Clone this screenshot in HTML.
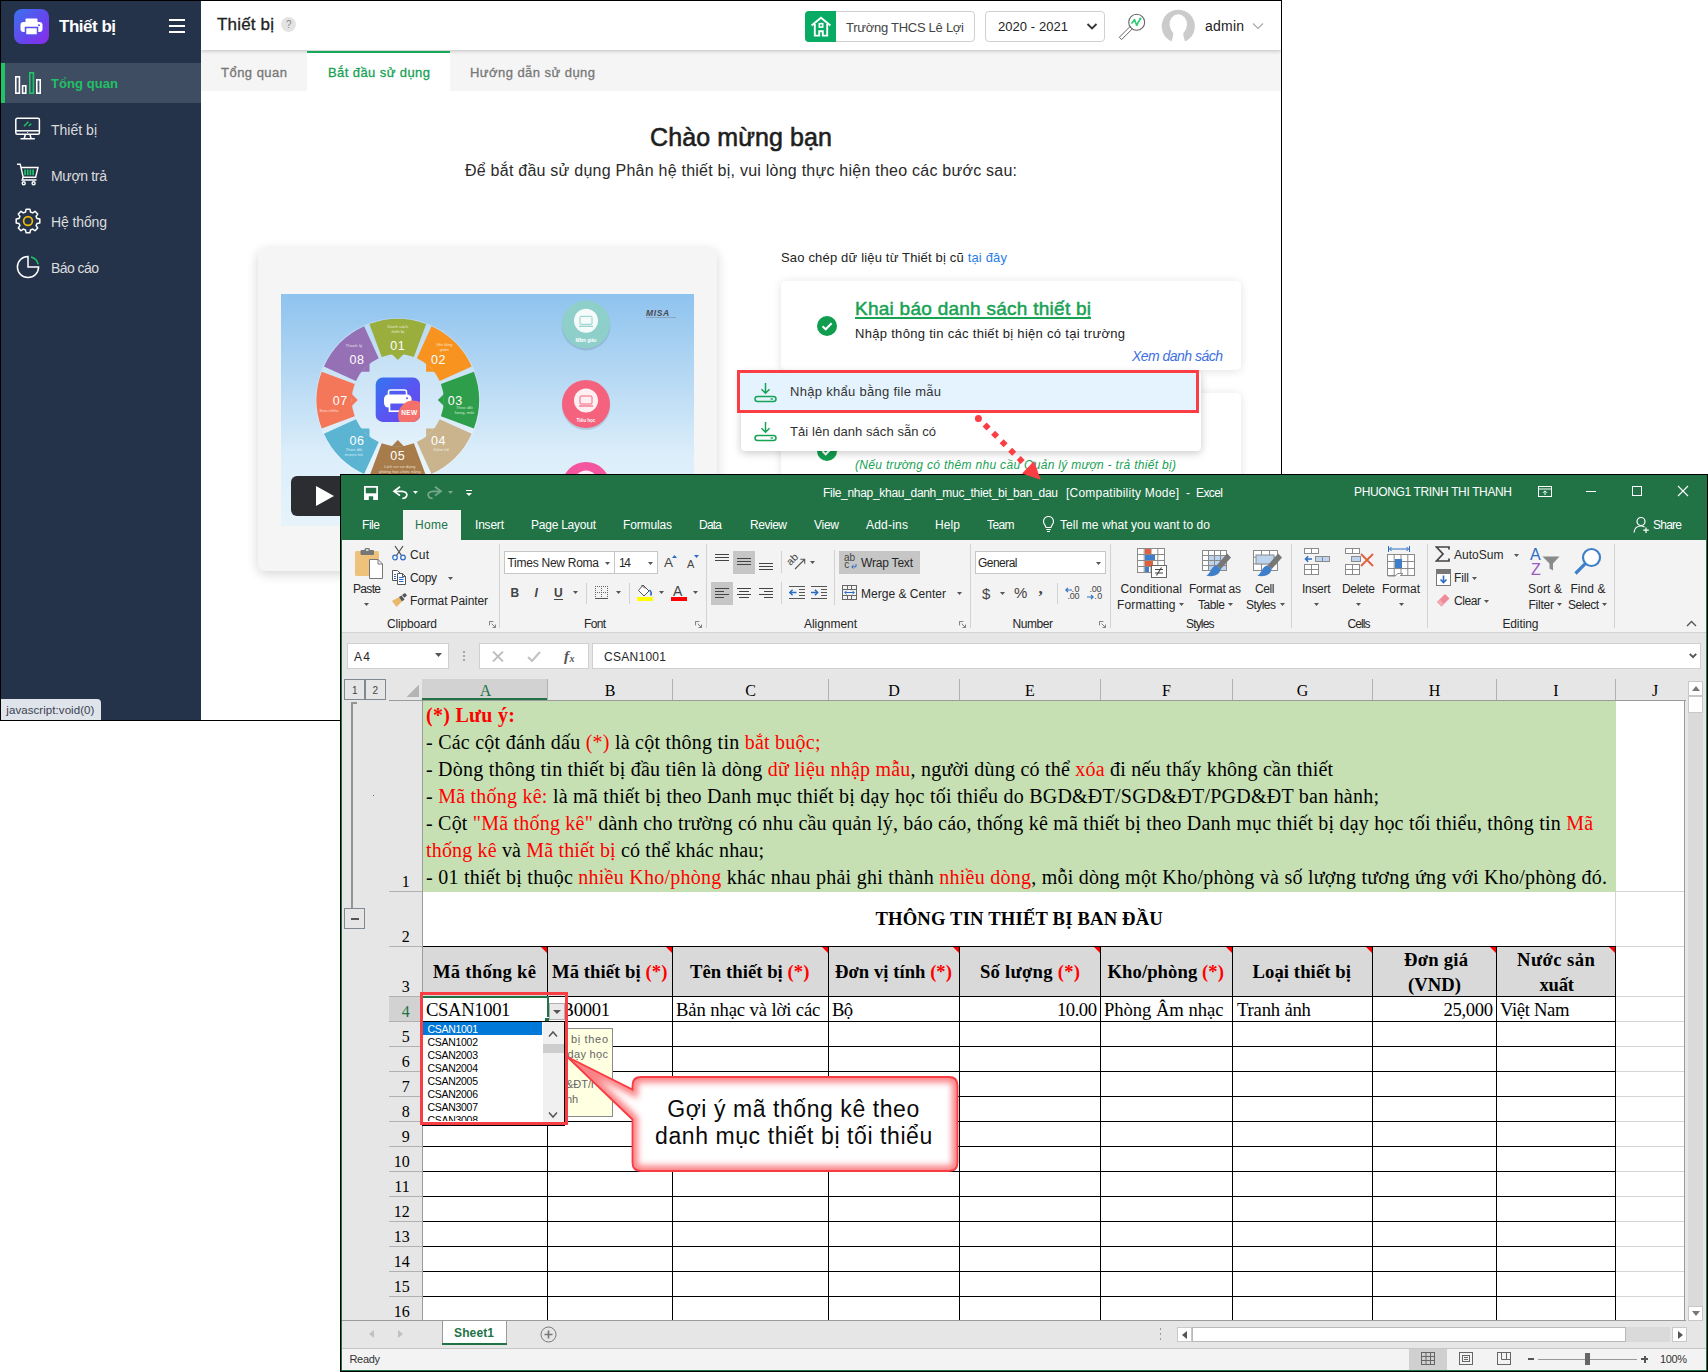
<!DOCTYPE html>
<html><head><meta charset="utf-8"><title>Thiết bị</title><style>html,body{margin:0;padding:0;background:#fff}
body{width:1708px;height:1372px;position:relative;overflow:hidden;font-family:"Liberation Sans",sans-serif}
.r{position:absolute;display:block}
.t{position:absolute;white-space:nowrap;line-height:0;font-family:"Liberation Sans",sans-serif;color:#000}
.se{font-family:"Liberation Serif",serif}
.b{font-weight:bold}.i{font-style:italic}
</style></head><body>
<div class="r" style="left:0;top:0;width:1282px;height:721px;background:#000"></div>
<div id="w1" class="r" style="left:1px;top:1px;width:1280px;height:719px;background:#fff;overflow:hidden">
<div class="r" style="left:-1px;top:-1px;width:1282px;height:721px">
<div class="r" style="left:201px;top:50px;width:1080px;height:41px;background:#f5f5f5;"></div>
<div class="r" style="left:201px;top:1px;width:1080px;height:49px;background:#fff;box-shadow:0 1px 4px rgba(0,0,0,.22);"></div>
<span class="t" style="left:217.00px;top:25.11px;font-size:17px;letter-spacing:0.179px;color:#212121;-webkit-text-stroke:0.3px #212121;">Thiết bị</span>
<div class="r" style="left:281px;top:17px;width:15px;height:15px;border-radius:50%;background:#e3e3e3"></div>
<span class="t" style="left:286.00px;top:24.54px;font-size:10px;color:#888;">?</span>
<div class="r" style="left:805px;top:11px;width:170px;height:31px;border:1px solid #d0d0d0;border-radius:4px;box-sizing:border-box;background:#fff"></div>
<div class="r" style="left:805px;top:11px;width:31px;height:31px;background:#08ab64;border-radius:4px 0 0 4px"></div>
<svg class="r" style="left:810px;top:15px" width="22" height="23" viewBox="0 0 22 23" fill="none" stroke="#fff" stroke-width="1.900" stroke-linejoin="miter"><path d="M1.600 10.400 L11 2.700 L20.400 10.400"/><path d="M4.800 9 V20.600 H9.200 V16.200 H12.800 V20.600 H17.200 V9"/><rect x="9.300" y="8.700" width="3.400" height="3.400" stroke-width="1.600"/></svg>
<span class="t" style="left:846.00px;top:27.50px;font-size:13px;letter-spacing:-0.269px;color:#444;">Trường THCS Lê Lợi</span>
<div class="r" style="left:985px;top:11px;width:120px;height:31px;border:1px solid #d0d0d0;border-radius:4px;box-sizing:border-box;background:#fff"></div>
<span class="t" style="left:998.00px;top:26.50px;font-size:13px;letter-spacing:0.061px;color:#222;">2020 - 2021</span>
<svg class="r" style="left:1086px;top:22px" width="12" height="9" viewBox="0 0 12 9" fill="none" stroke="#333" stroke-width="1.8"><path d="M1.5 2 L6 6.5 L10.5 2"/></svg>
<svg class="r" style="left:1117px;top:11px" width="30" height="30" viewBox="0 0 30 30" fill="none"><circle cx="19.7" cy="11.2" r="8" stroke="#666" stroke-width="1.1" fill="#fff"/><path d="M12.900 15.700 L15.200 18 L4.600 28.600 L2.300 26.300Z" stroke="#666" stroke-width="1" fill="#fff"/><path d="M14.500 12.500 L17.500 9 L19.700 14 L23.500 7.500" stroke="#2ecc71" stroke-width="1.6" stroke-linejoin="round"/><circle cx="17.500" cy="9" r="1.100" fill="#2ecc71"/><circle cx="19.700" cy="14" r="1.100" fill="#2ecc71"/><circle cx="23.500" cy="7.500" r="1.100" fill="#2ecc71"/></svg>
<svg class="r" style="left:1161px;top:9px" width="35" height="35" viewBox="0 0 35 35"><circle cx="17.3" cy="17.3" r="16.6" fill="#cbcbcb"/><ellipse cx="17.3" cy="15.5" rx="8.7" ry="10.2" fill="#fff"/><path d="M12.3 22 C12.5 27 11.5 30 9.5 35 H25 C23 30 22 27 22.300 22Z" fill="#fff"/></svg>
<span class="t" style="left:1205.00px;top:26.15px;font-size:14px;letter-spacing:0.217px;color:#222;">admin</span>
<svg class="r" style="left:1251.5px;top:22.3px" width="12" height="8" viewBox="0 0 12 8" fill="none" stroke="#aaa" stroke-width="1.2"><path d="M1 1.5 L6 6.5 L11 1.5"/></svg>
<div class="r" style="left:307px;top:51px;width:143px;height:40px;background:#fff;border-top:2px solid #16a95a;box-sizing:border-box;"></div>
<span class="t" style="left:221.00px;top:72.50px;font-size:13px;letter-spacing:0.480px;color:#777;-webkit-text-stroke:0.3px #777;">Tổng quan</span>
<span class="t" style="left:328.00px;top:72.50px;font-size:13px;letter-spacing:0.417px;color:#17a254;-webkit-text-stroke:0.3px #17a254;">Bắt đầu sử dụng</span>
<span class="t" style="left:470.00px;top:72.50px;font-size:13px;letter-spacing:0.455px;color:#777;-webkit-text-stroke:0.3px #777;">Hướng dẫn sử dụng</span>
<div class="r" style="left:1px;top:1px;width:200px;height:719px;background:#24334a;"></div>
<div class="r" style="left:14px;top:9px;width:35px;height:35px;border-radius:8px;background:linear-gradient(135deg,#3a73ee 0%,#6447ee 55%,#8a2be8 100%)"></div>
<svg class="r" style="left:20px;top:16px" width="23" height="21" viewBox="0 0 23 21"><rect x="5.5" y="2.5" width="12" height="5" rx="1" fill="#fff"/><rect x="0.5" y="6" width="22" height="10" rx="3" fill="#fff"/><rect x="5.5" y="11.5" width="12" height="7.5" fill="#fff" stroke="#5850ee" stroke-width="1.5"/><circle cx="19" cy="9.3" r="1" fill="#5850ee"/></svg>
<span class="t b" style="left:59.00px;top:27.11px;font-size:17px;letter-spacing:-0.491px;color:#fff;">Thiết bị</span>
<div class="r" style="left:169px;top:19px;width:16px;height:2px;background:#fff;"></div>
<div class="r" style="left:169px;top:25px;width:16px;height:2px;background:#fff;"></div>
<div class="r" style="left:169px;top:31px;width:16px;height:2px;background:#fff;"></div>
<div class="r" style="left:1px;top:63px;width:200px;height:40px;background:#3f4d63;"></div>
<div class="r" style="left:1px;top:63px;width:4px;height:40px;background:#1fc466;"></div>
<span class="t b" style="left:51.00px;top:83.50px;font-size:13px;letter-spacing:0.072px;color:#22c064;">Tổng quan</span>
<svg class="r" style="left:14px;top:70px" width="28" height="26" viewBox="0 0 28 26" fill="none" stroke-width="1.6"><rect x="1.8" y="6.8" width="3.6" height="16.4" stroke="#fff"/><rect x="8.6" y="15.8" width="3.2" height="7.4" stroke="#fff"/><rect x="15.8" y="2.8" width="3.6" height="20.4" stroke="#1fc466"/><rect x="22.8" y="9.8" width="3.4" height="13.4" stroke="#fff"/></svg>
<span class="t" style="left:51.00px;top:129.75px;font-size:14px;letter-spacing:0.013px;color:#dcdcdc;">Thiết bị</span>
<span class="t" style="left:51.00px;top:175.75px;font-size:14px;letter-spacing:-0.318px;color:#dcdcdc;">Mượn trả</span>
<span class="t" style="left:51.00px;top:221.75px;font-size:14px;letter-spacing:-0.117px;color:#dcdcdc;">Hệ thống</span>
<span class="t" style="left:51.00px;top:267.75px;font-size:14px;letter-spacing:-0.562px;color:#dcdcdc;">Báo cáo</span>
<svg class="r" style="left:14px;top:116px" width="28" height="26" viewBox="0 0 28 26" fill="none" stroke="#fff" stroke-width="1.500"><rect x="1.800" y="2.300" width="23.600" height="16" rx="1.500"/><path d="M1.800 14.800 H25.400"/><path d="M11.300 18.500 L10.300 22.300 M16 18.500 L17 22.300 M6.500 22.800 H20.800"/><path d="M10 10.300 L14.400 5.800 M14.600 10 L17.300 7.700" stroke="#1fc466" stroke-width="1.500"/><circle cx="13.600" cy="16.600" r=".6" fill="#fff" stroke="none"/></svg>
<svg class="r" style="left:14px;top:161px" width="28" height="27" viewBox="0 0 28 27" fill="none" stroke="#fff" stroke-width="1.400"><path d="M3 3.200 H6.200 L9.200 16.200 H21.700 L24 6.500 H7"/><path d="M9.200 16.200 L8.200 19 H22.500"/><circle cx="9.700" cy="22.300" r="1.500"/><circle cx="19.600" cy="22.300" r="1.500"/><path d="M11 8.600 V14.200 M13.700 8.600 V14.200 M16.400 8.600 V14.200 M19.100 8.600 V14.200" stroke="#1fc466" stroke-width="1.700"/></svg>
<svg class="r" style="left:14px;top:207px" width="28" height="28" viewBox="0 0 28 28" fill="none"><path d="M23.0 11.5 L25.8 12.1 L25.8 15.9 L23.0 16.5 L22.1 18.6 L23.7 21.0 L21.0 23.7 L18.6 22.1 L16.5 23.0 L15.9 25.8 L12.1 25.8 L11.5 23.0 L9.4 22.1 L7.0 23.7 L4.3 21.0 L5.9 18.6 L5.0 16.5 L2.2 15.9 L2.2 12.1 L5.0 11.5 L5.9 9.4 L4.3 7.0 L7.0 4.3 L9.4 5.9 L11.5 5.0 L12.1 2.2 L15.9 2.2 L16.5 5.0 L18.6 5.9 L21.0 4.3 L23.7 7.0 L22.1 9.4Z" stroke="#fff" stroke-width="1.500" stroke-linejoin="round"/><circle cx="14" cy="14" r="4.400" stroke="#f0b90b" stroke-width="1.700"/></svg>
<svg class="r" style="left:14px;top:253px" width="28" height="28" viewBox="0 0 28 28" fill="none" stroke-width="1.500"><path d="M14 3.400 A10.600 10.600 0 1 0 24.600 14 H14 Z" stroke="#fff"/><path d="M17 4 A9.800 9.800 0 0 1 24.200 11.300" stroke="#1fc466"/></svg>
<div class="r" style="left:1px;top:699px;width:100px;height:21px;background:#dfe3ea;border-radius:0 4px 0 0;"></div>
<span class="t" style="left:6.30px;top:709.52px;font-size:11.5px;letter-spacing:0.070px;color:#3a4250;">javascript:void(0)</span>
<span class="t" style="left:650.00px;top:137.34px;font-size:25px;letter-spacing:0.106px;color:#1e1e1e;-webkit-text-stroke:0.6px #1e1e1e;">Chào mừng bạn</span>
<span class="t" style="left:465.00px;top:170.96px;font-size:16px;letter-spacing:0.240px;color:#2a2a2a;">Để bắt đầu sử dụng Phân hệ thiết bị, vui lòng thực hiện theo các bước sau:</span>
<span class="t" style="left:781.00px;top:257.50px;font-size:13px;letter-spacing:0.171px;"><span style="color:#222">Sao chép dữ liệu từ Thiết bị cũ </span><span style="color:#2a7de1">tại đây</span></span>
<div class="r" style="left:258px;top:248px;width:459px;height:323px;background:#f5f5f5;border-radius:7px;box-shadow:0 3px 12px rgba(0,0,0,.17);"></div>
<div class="r" style="left:281px;top:294px;width:413px;height:232px;background:linear-gradient(180deg,#8ec3ef 0%,#b5d8f3 35%,#dceefa 70%,#e6f3fb 100%);overflow:hidden">
<svg class="r" style="left:0;top:0" width="413" height="231" viewBox="0 0 413 231"><circle cx="116.8" cy="106.1" r="82.2" fill="rgba(255,255,255,.30)"/><path d="M88.4 30.0 A81.2 81.2 0 0 1 145.2 30.0 L132.9 63.0 A46 46 0 0 0 100.7 63.0Z" fill="#9aae3e"/><path d="M110.8 60.0 L116.8 66.1 L122.8 60.0Z" fill="#9aae3e"/><text x="116.8" y="55.5" text-anchor="middle" font-family="Liberation Sans" font-size="12.5" letter-spacing=".6" fill="#fff">01</text><text x="116.8" y="33.6" text-anchor="middle" font-family="Liberation Sans" font-size="4.3" fill="rgba(255,255,255,.78)">Danh sách</text><text x="116.8" y="38.7" text-anchor="middle" font-family="Liberation Sans" font-size="4.3" fill="rgba(255,255,255,.78)">thiết bị</text><path d="M150.5 32.2 A81.2 81.2 0 0 1 190.7 72.4 L158.7 87.0 A46 46 0 0 0 135.9 64.2Z" fill="#f7931e"/><path d="M145.1 69.2 L145.1 77.8 L153.7 77.8Z" fill="#f7931e"/><text x="157.5" y="69.8" text-anchor="middle" font-family="Liberation Sans" font-size="12.5" letter-spacing=".6" fill="#fff">02</text><text x="163.3" y="51.6" text-anchor="middle" font-family="Liberation Sans" font-size="4.3" fill="rgba(255,255,255,.78)">Ghi tăng</text><text x="163.3" y="56.7" text-anchor="middle" font-family="Liberation Sans" font-size="4.3" fill="rgba(255,255,255,.78)">giảm</text><path d="M192.9 77.7 A81.2 81.2 0 0 1 192.9 134.5 L159.9 122.2 A46 46 0 0 0 159.9 90.0Z" fill="#2e9e4a"/><path d="M162.9 100.1 L156.8 106.1 L162.9 112.1Z" fill="#2e9e4a"/><text x="174.3" y="110.5" text-anchor="middle" font-family="Liberation Sans" font-size="12.5" letter-spacing=".6" fill="#fff">03</text><text x="183.3" y="114.6" text-anchor="middle" font-family="Liberation Sans" font-size="4.3" fill="rgba(255,255,255,.78)">Theo dõi</text><text x="183.3" y="119.7" text-anchor="middle" font-family="Liberation Sans" font-size="4.3" fill="rgba(255,255,255,.78)">hỏng, mất</text><path d="M190.7 139.8 A81.2 81.2 0 0 1 150.5 180.0 L135.9 148.0 A46 46 0 0 0 158.7 125.2Z" fill="#c9b48d"/><path d="M153.7 134.4 L145.1 134.4 L145.1 143.0Z" fill="#c9b48d"/><text x="157.5" y="151.2" text-anchor="middle" font-family="Liberation Sans" font-size="12.5" letter-spacing=".6" fill="#fff">04</text><text x="160.3" y="157.1" text-anchor="middle" font-family="Liberation Sans" font-size="4.3" fill="rgba(255,255,255,.78)">Kiểm kê</text><path d="M145.2 182.2 A81.2 81.2 0 0 1 88.4 182.2 L100.7 149.2 A46 46 0 0 0 132.9 149.2Z" fill="#a87c4a"/><path d="M122.8 152.2 L116.8 146.1 L110.8 152.2Z" fill="#a87c4a"/><text x="116.8" y="165.5" text-anchor="middle" font-family="Liberation Sans" font-size="12.5" letter-spacing=".6" fill="#fff">05</text><text x="118.8" y="173.6" text-anchor="middle" font-family="Liberation Sans" font-size="4.3" fill="rgba(255,255,255,.78)">Lịch sử sử dụng</text><text x="118.8" y="178.7" text-anchor="middle" font-family="Liberation Sans" font-size="4.3" fill="rgba(255,255,255,.78)">phòng học chức năng</text><path d="M83.1 180.0 A81.2 81.2 0 0 1 42.9 139.8 L74.9 125.2 A46 46 0 0 0 97.7 148.0Z" fill="#5ab4d2"/><path d="M88.5 143.0 L88.5 134.4 L79.9 134.4Z" fill="#5ab4d2"/><text x="76.1" y="151.2" text-anchor="middle" font-family="Liberation Sans" font-size="12.5" letter-spacing=".6" fill="#fff">06</text><text x="72.8" y="157.1" text-anchor="middle" font-family="Liberation Sans" font-size="4.3" fill="rgba(255,255,255,.78)">Theo dõi</text><text x="72.8" y="162.2" text-anchor="middle" font-family="Liberation Sans" font-size="4.3" fill="rgba(255,255,255,.78)">mượn trả</text><path d="M40.7 134.5 A81.2 81.2 0 0 1 40.7 77.7 L73.7 90.0 A46 46 0 0 0 73.7 122.2Z" fill="#f4775a"/><path d="M70.7 112.1 L76.8 106.1 L70.7 100.1Z" fill="#f4775a"/><text x="59.3" y="110.5" text-anchor="middle" font-family="Liberation Sans" font-size="12.5" letter-spacing=".6" fill="#fff">07</text><text x="47.8" y="118.1" text-anchor="middle" font-family="Liberation Sans" font-size="4.3" fill="rgba(255,255,255,.78)">Sửa chữa</text><path d="M42.9 72.4 A81.2 81.2 0 0 1 83.1 32.2 L97.7 64.2 A46 46 0 0 0 74.9 87.0Z" fill="#9570b4"/><path d="M79.9 77.8 L88.5 77.8 L88.5 69.2Z" fill="#9570b4"/><text x="76.1" y="69.8" text-anchor="middle" font-family="Liberation Sans" font-size="12.5" letter-spacing=".6" fill="#fff">08</text><text x="72.8" y="53.1" text-anchor="middle" font-family="Liberation Sans" font-size="4.3" fill="rgba(255,255,255,.78)">Thanh lý</text><defs><linearGradient id="cg" x1="0" y1="0" x2="1" y2="1"><stop offset="0" stop-color="#3276ee"/><stop offset=".55" stop-color="#5a55f2"/><stop offset="1" stop-color="#7040ea"/></linearGradient><clipPath id="cc"><rect x="94.7" y="83.6" width="44.3" height="44.3" rx="7"/></clipPath></defs><rect x="94.7" y="83.6" width="44.3" height="44.3" rx="7" fill="url(#cg)"/><rect x="107.5" y="96" width="18" height="7" rx="2" fill="none" stroke="#fff" stroke-width="1.6"/><rect x="103" y="100.5" width="27.6" height="13" rx="4.5" fill="#fff"/><rect x="108.5" y="108.7" width="16" height="8.5" fill="#5a55f2" stroke="#fff" stroke-width="1.7"/><circle cx="126" cy="104.3" r="1" fill="#5a55f2"/><circle cx="132.3" cy="121.8" r="15.2" fill="#f4706a" clip-path="url(#cc)"/><text x="128.3" y="120.7" text-anchor="middle" font-family="Liberation Sans" font-weight="bold" font-size="6.6" letter-spacing=".3" fill="#fff">NEW</text><circle cx="305" cy="32.1" r="24.3" fill="rgba(60,60,90,.16)"/><circle cx="305" cy="30.3" r="24" fill="#8fcfca"/><circle cx="305" cy="26.8" r="12" fill="rgba(255,255,255,.9)"/><rect x="299" y="22.3" width="12" height="8" rx="1" fill="none" stroke="#8fcfca" stroke-width="1"/><path d="M298 32.3 H312" stroke="#8fcfca" stroke-width="1.2"/><text x="305" y="48.3" text-anchor="middle" font-family="Liberation Sans" font-weight="bold" font-size="4.6" fill="#fff">Mầm giáo</text><circle cx="305" cy="111.8" r="24.3" fill="rgba(60,60,90,.16)"/><circle cx="305" cy="110" r="24" fill="#f4627e"/><circle cx="305" cy="106.5" r="12" fill="rgba(255,255,255,.9)"/><rect x="299" y="102" width="12" height="8" rx="1" fill="none" stroke="#f4627e" stroke-width="1"/><path d="M298 112 H312" stroke="#f4627e" stroke-width="1.2"/><text x="305" y="128.0" text-anchor="middle" font-family="Liberation Sans" font-weight="bold" font-size="4.6" fill="#fff">Tiểu học</text><circle cx="305" cy="193.8" r="24.3" fill="rgba(60,60,90,.16)"/><circle cx="305" cy="192" r="24" fill="#f3559f"/><circle cx="305" cy="188.5" r="12" fill="rgba(255,255,255,.9)"/><rect x="299" y="184" width="12" height="8" rx="1" fill="none" stroke="#f3559f" stroke-width="1"/><path d="M298 194 H312" stroke="#f3559f" stroke-width="1.2"/><text x="365" y="21.5" font-family="Liberation Sans" font-weight="bold" font-style="italic" font-size="8.5" fill="#4a4a52" letter-spacing=".6">MISA</text><path d="M365 23.500 H395" stroke="#8a8a92" stroke-width=".6"/></svg>
</div>
<div class="r" style="left:291px;top:476px;width:60px;height:40px;background:#2b2d30;border-radius:6px;"></div>
<svg class="r" style="left:315px;top:485px" width="20" height="22" viewBox="0 0 20 22"><path d="M1 1 L19 11 L1 21Z" fill="#fff"/></svg>
<div class="r" style="left:781px;top:281px;width:460px;height:89px;background:#fff;border-radius:5px;box-shadow:0 1px 10px rgba(0,0,0,.12);"></div>
<div class="r" style="left:781px;top:393px;width:460px;height:120px;background:#fff;border-radius:5px;box-shadow:0 1px 10px rgba(0,0,0,.12);"></div>
<span class="t" style="left:855.00px;top:308.92px;font-size:19px;letter-spacing:0.261px;color:#17a254;-webkit-text-stroke:0.5px #17a254;">Khai báo danh sách thiết bị</span>
<div class="r" style="left:855px;top:317px;width:236px;height:1.5px;background:#17a254;"></div>
<svg class="r" style="left:817px;top:316px" width="20" height="20" viewBox="0 0 20 20"><circle cx="10" cy="10" r="10" fill="#119d50"/><path d="M5.5 10.2 L8.7 13.3 L14.6 7.2" stroke="#fff" stroke-width="2" fill="none"/></svg>
<span class="t" style="left:855.00px;top:333.50px;font-size:13px;letter-spacing:0.301px;color:#222;">Nhập thông tin các thiết bị hiện có tại trường</span>
<span class="t i" style="left:1132.00px;top:356.15px;font-size:14px;letter-spacing:-0.523px;color:#3d6fe0;">Xem danh sách</span>
<svg class="r" style="left:817px;top:441px" width="20" height="20" viewBox="0 0 20 20"><circle cx="10" cy="10" r="10" fill="#119d50"/><path d="M5.5 10.2 L8.7 13.3 L14.6 7.2" stroke="#fff" stroke-width="2" fill="none"/></svg>
<span class="t i" style="left:855.00px;top:465.24px;font-size:12px;letter-spacing:0.312px;color:#17a254;">(Nếu trường có thêm nhu cầu Quản lý mượn - trả thiết bị)</span>
<div class="r" style="left:741px;top:372px;width:460px;height:79px;background:#fff;border-radius:4px;box-shadow:0 2px 8px rgba(0,0,0,.22);"></div>
<div class="r" style="left:737px;top:370px;width:462px;height:43px;background:#e5f3ff;border:3px solid #fb3e44;box-sizing:border-box;"></div>
<svg class="r" style="left:754px;top:382px" width="23" height="21" viewBox="0 0 23 21" fill="none" stroke="#17a254" stroke-width="1.5"><path d="M11.5 1 V11 M7.5 7.2 L11.5 11.2 L15.5 7.2"/><rect x="1" y="14.5" width="21" height="5" rx="2.5"/><path d="M16.5 17 H19" stroke-width="1.3"/></svg>
<svg class="r" style="left:754px;top:421px" width="23" height="21" viewBox="0 0 23 21" fill="none" stroke="#17a254" stroke-width="1.5"><path d="M11.5 1 V11 M7.5 7.2 L11.5 11.2 L15.5 7.2"/><rect x="1" y="14.5" width="21" height="5" rx="2.5"/><path d="M16.5 17 H19" stroke-width="1.3"/></svg>
<span class="t" style="left:790.00px;top:392.20px;font-size:13px;letter-spacing:0.294px;color:#333;">Nhập khẩu bằng file mẫu</span>
<span class="t" style="left:790.00px;top:432.20px;font-size:13px;letter-spacing:0.064px;color:#333;">Tải lên danh sách sẵn có</span>
</div></div>
<div class="r" style="left:340px;top:474px;width:1368px;height:898px;background:#000;"></div>
<div class="r" style="left:341px;top:475px;width:1366px;height:896px;background:#217346;"></div>
<div class="r" style="left:342px;top:540px;width:1364px;height:830px;background:#e6e6e6;"></div>
<svg class="r" style="left:364px;top:486px" width="14" height="14" viewBox="0 0 14 14" fill="none"><path d="M0.900 0.900 H13.100 V13.100 H0.900Z" stroke="#fff" stroke-width="1.700"/><rect x="1" y="7.300" width="12" height="6" fill="#fff"/><rect x="4.800" y="10.300" width="4.400" height="3.800" fill="#217346"/></svg>
<svg class="r" style="left:392px;top:485px" width="17" height="15" viewBox="0 0 17 15" fill="none" stroke="#fff" stroke-width="1.7"><path d="M8 1.800 L2 6.300 L8 10.600"/><path d="M2.500 6.300 H10 C13.500 6.300 15.300 8.500 14.800 10.600 C14.200 12.600 12.500 13.500 10.300 13.500"/></svg>
<svg class="r" style="left:413.0px;top:491px" width="5" height="3" viewBox="0 0 5 3"><path d="M0 0 H5 L2.5 3Z" fill="#fff"/></svg>
<svg class="r" style="left:426px;top:485px;opacity:.38" width="17" height="15" viewBox="0 0 17 15" fill="none" stroke="#fff" stroke-width="1.7"><path d="M9 1.800 L15 6.300 L9 10.600"/><path d="M14.500 6.300 H7 C3.500 6.300 1.700 8.500 2.200 10.600 C2.800 12.600 4.500 13.500 6.700 13.500"/></svg>
<svg class="r" style="left:448.0px;top:491px" width="5" height="3" viewBox="0 0 5 3"><path d="M0 0 H5 L2.5 3Z" fill="rgba(255,255,255,.4)"/></svg>
<div class="r" style="left:466px;top:490px;width:6px;height:1px;background:#fff;"></div>
<svg class="r" style="left:466.0px;top:493px" width="6" height="3" viewBox="0 0 6 3"><path d="M0 0 H6 L3.0 3Z" fill="#fff"/></svg>
<span class="t" style="left:823.00px;top:492.84px;font-size:12px;letter-spacing:-0.304px;color:#fff;">File_nhap_khau_danh_muc_thiet_bi_ban_dau</span>
<span class="t" style="left:1066.00px;top:492.84px;font-size:12px;letter-spacing:0.226px;color:#fff;">[Compatibility Mode]</span>
<span class="t" style="left:1186.00px;top:492.84px;font-size:12px;color:#fff;">-</span>
<span class="t" style="left:1196.00px;top:492.84px;font-size:12px;letter-spacing:-0.586px;color:#fff;">Excel</span>
<span class="t" style="left:1354.00px;top:491.84px;font-size:12px;letter-spacing:-0.364px;color:#fff;">PHUONG1 TRINH THI THANH</span>
<svg class="r" style="left:1538px;top:486px" width="14" height="11" viewBox="0 0 14 11" fill="none" stroke="#fff" stroke-width="1"><rect x="0.5" y="0.5" width="13" height="10"/><path d="M0.5 3 H13.5 M7 9 V5 M5 6.8 L7 4.8 L9 6.8"/></svg>
<div class="r" style="left:1586px;top:491px;width:10px;height:1px;background:#fff;"></div>
<div class="r" style="left:1632px;top:486px;width:10px;height:10px;border:1px solid #fff;box-sizing:border-box;"></div>
<svg class="r" style="left:1677px;top:485px" width="12" height="12" viewBox="0 0 12 12" stroke="#fff" stroke-width="1.1"><path d="M1 1 L11 11 M11 1 L1 11"/></svg>
<div class="r" style="left:403px;top:510px;width:58px;height:31px;background:#f3f3f3;"></div>
<span class="t" style="left:362.00px;top:524.84px;font-size:12px;letter-spacing:-0.445px;color:#fff;">File</span>
<span class="t" style="left:415.00px;top:524.84px;font-size:12px;letter-spacing:0.330px;color:#217346;">Home</span>
<span class="t" style="left:475.00px;top:524.84px;font-size:12px;letter-spacing:-0.202px;color:#fff;">Insert</span>
<span class="t" style="left:531.00px;top:524.84px;font-size:12px;letter-spacing:-0.239px;color:#fff;">Page Layout</span>
<span class="t" style="left:623.00px;top:524.84px;font-size:12px;letter-spacing:-0.144px;color:#fff;">Formulas</span>
<span class="t" style="left:699.00px;top:524.84px;font-size:12px;letter-spacing:-0.782px;color:#fff;">Data</span>
<span class="t" style="left:750.00px;top:524.84px;font-size:12px;letter-spacing:-0.469px;color:#fff;">Review</span>
<span class="t" style="left:814.00px;top:524.84px;font-size:12px;letter-spacing:-0.264px;color:#fff;">View</span>
<span class="t" style="left:866.00px;top:524.84px;font-size:12px;letter-spacing:0.219px;color:#fff;">Add-ins</span>
<span class="t" style="left:935.00px;top:524.84px;font-size:12px;letter-spacing:0.107px;color:#fff;">Help</span>
<span class="t" style="left:987.00px;top:524.84px;font-size:12px;letter-spacing:-0.615px;color:#fff;">Team</span>
<svg class="r" style="left:1042px;top:516px" width="13" height="17" viewBox="0 0 13 17" fill="none" stroke="#fff" stroke-width="1.1"><path d="M4 11.5 C4 9.5 1.5 8.5 1.5 5.5 A5 5 0 0 1 11.5 5.5 C11.5 8.5 9 9.5 9 11.5 Z"/><path d="M4.3 13.5 H8.7 M5 15.5 H8"/></svg>
<span class="t" style="left:1060.00px;top:524.84px;font-size:12px;letter-spacing:0.074px;color:#fff;">Tell me what you want to do</span>
<svg class="r" style="left:1633px;top:516px" width="17" height="18" viewBox="0 0 17 18" fill="none" stroke="#fff" stroke-width="1.2"><circle cx="8" cy="5.5" r="4"/><path d="M1 16.5 C1.5 12 4.5 10 8 10 C9.5 10 10.5 10.3 11.5 11"/><path d="M13 11.5 V17 M10.2 14.2 H15.8"/></svg>
<span class="t" style="left:1653.00px;top:524.84px;font-size:12px;letter-spacing:-0.755px;color:#fff;">Share</span>
<div class="r" style="left:342px;top:540px;width:1364px;height:92px;background:#f3f3f3;"></div>
<div class="r" style="left:403px;top:539px;width:58px;height:3px;background:#f3f3f3;"></div>
<div class="r" style="left:342px;top:632px;width:1364px;height:1px;background:#d4d4d4;"></div>
<svg class="r" style="left:354px;top:548px" width="30" height="31" viewBox="0 0 30 31"><rect x="1" y="3" width="24" height="25" rx="1.5" fill="#eec27b"/><rect x="6.500" y="2" width="13.500" height="5" rx="1" fill="#777"/><rect x="10.500" y="0" width="5.500" height="4" rx="1.500" fill="#777"/><rect x="12" y="1.300" width="2.500" height="1.500" fill="#f3f3f3"/><path d="M15.500 11.500 H24 L28.500 16 V30.500 H15.500Z" fill="#fff" stroke="#777" stroke-width="1"/><path d="M24 11.500 V16 H28.500" fill="none" stroke="#777"/></svg>
<span class="t" style="left:353.00px;top:588.84px;font-size:12px;letter-spacing:-0.671px;color:#262626;">Paste</span>
<svg class="r" style="left:363.5px;top:603px" width="5" height="3" viewBox="0 0 5 3"><path d="M0 0 H5 L2.5 3Z" fill="#555"/></svg>
<svg class="r" style="left:391px;top:545px" width="16" height="16" viewBox="0 0 16 16" fill="none"><path d="M4 1 L10.5 10.5 M12 1 L5.5 10.5" stroke="#555" stroke-width="1.3"/><circle cx="4" cy="12.5" r="2.3" stroke="#2b6cc4" stroke-width="1.2"/><circle cx="12" cy="12.5" r="2.3" stroke="#2b6cc4" stroke-width="1.2"/></svg>
<span class="t" style="left:410.00px;top:554.84px;font-size:12px;letter-spacing:0.163px;color:#262626;">Cut</span>
<svg class="r" style="left:391px;top:569px" width="16" height="16" viewBox="0 0 16 16" fill="#fff" stroke="#555" stroke-width="1"><path d="M1.500 1.500 H6.500 L9.500 4.500 V11.500 H1.500Z"/><path d="M3 5.500 H5 M3 7.500 H5 M3 9.500 H5" stroke="#2b6cc4"/><path d="M6.500 4.500 H11.500 L14.500 7.500 V15.500 H6.500Z"/><path d="M11.500 4.500 V7.500 H14.500" fill="none"/><path d="M8 8.500 H12.500 M8 10.500 H12.500 M8 12.500 H12.500" stroke="#2b6cc4"/></svg>
<span class="t" style="left:410.00px;top:577.84px;font-size:12px;letter-spacing:-0.337px;color:#262626;">Copy</span>
<svg class="r" style="left:448.0px;top:577px" width="5" height="3" viewBox="0 0 5 3"><path d="M0 0 H5 L2.5 3Z" fill="#555"/></svg>
<svg class="r" style="left:391px;top:592px" width="17" height="16" viewBox="0 0 17 16"><path d="M1 9 L8 5 L11 9.5 L5.5 15 Z" fill="#e8b96a"/><path d="M8 5 L10.5 3.5 L13.5 7.5 L11 9.5Z" fill="#555"/><path d="M11 3 L14 1 L16 3.5 L13.3 5.8Z" fill="#555"/></svg>
<span class="t" style="left:410.00px;top:600.84px;font-size:12px;letter-spacing:-0.105px;color:#262626;">Format Painter</span>
<span class="t" style="left:387.00px;top:623.84px;font-size:12px;letter-spacing:-0.170px;color:#262626;">Clipboard</span>
<svg class="r" style="left:489px;top:621px" width="7" height="7" viewBox="0 0 8 8" fill="none" stroke="#777" stroke-width="1.100"><path d="M0.5 5 V0.5 H5"/><path d="M3 3 L7 7 M7.5 4 V7.5 H4"/></svg>
<div class="r" style="left:499px;top:544px;width:1px;height:84px;background:#d2d2d2;"></div>
<div class="r" style="left:504px;top:551px;width:111px;height:23px;background:#fff;border:1px solid #c6c6c6;box-sizing:border-box;"></div>
<div class="r" style="left:615px;top:551px;width:43px;height:23px;background:#fff;border:1px solid #c6c6c6;box-sizing:border-box;border-left:none;"></div>
<div class="r" style="left:614px;top:551px;width:1px;height:23px;background:#c6c6c6;"></div>
<span class="t" style="left:507.50px;top:562.84px;font-size:12px;letter-spacing:-0.262px;color:#262626;">Times New Roma</span>
<svg class="r" style="left:604.5px;top:562px" width="5" height="3" viewBox="0 0 5 3"><path d="M0 0 H5 L2.5 3Z" fill="#555"/></svg>
<span class="t" style="left:619.00px;top:562.84px;font-size:12px;letter-spacing:-1.500px;color:#262626;">14</span>
<svg class="r" style="left:647.5px;top:562px" width="5" height="3" viewBox="0 0 5 3"><path d="M0 0 H5 L2.5 3Z" fill="#555"/></svg>
<span class="t" style="left:664.00px;top:562.82px;font-size:13.5px;color:#444;">A</span>
<svg class="r" style="left:672px;top:555px" width="5" height="3" viewBox="0 0 5 3"><path d="M0 3 L2.500 0 L5 3Z" fill="#2b6cc4"/></svg>
<span class="t" style="left:687.00px;top:563.69px;font-size:11px;color:#444;">A</span>
<svg class="r" style="left:694px;top:555px" width="5" height="3" viewBox="0 0 5 3"><path d="M0 0 L2.500 3 L5 0Z" fill="#2b6cc4"/></svg>
<span class="t b" style="left:510.50px;top:592.84px;font-size:12px;color:#444;">B</span>
<span class="t b i" style="left:534.50px;top:592.84px;font-size:12px;color:#444;">I</span>
<span class="t b" style="left:554.00px;top:592.84px;font-size:12px;color:#444;">U</span>
<div class="r" style="left:554px;top:599px;width:9px;height:1px;background:#444;"></div>
<svg class="r" style="left:572.5px;top:591px" width="5" height="3" viewBox="0 0 5 3"><path d="M0 0 H5 L2.5 3Z" fill="#555"/></svg>
<div class="r" style="left:586px;top:583px;width:1px;height:21px;background:#d2d2d2;"></div>
<svg class="r" style="left:595px;top:586px" width="14" height="14" viewBox="0 0 14 14" fill="none" stroke="#666" stroke-width="1"><path d="M0 0.500 H14 M0 6.500 H14 M0.500 0 V13 M6.500 0 V13 M12.500 0 V13" stroke-dasharray="1 1"/><path d="M0 12.500 H13" stroke="#555"/></svg>
<svg class="r" style="left:615.5px;top:591px" width="5" height="3" viewBox="0 0 5 3"><path d="M0 0 H5 L2.5 3Z" fill="#555"/></svg>
<div class="r" style="left:629px;top:583px;width:1px;height:21px;background:#d2d2d2;"></div>
<svg class="r" style="left:637px;top:584px" width="17" height="13" viewBox="0 0 17 13" fill="none"><path d="M6 1 L12 7 L7 12 L1.5 6.5 Z" fill="#fff" stroke="#555" stroke-width="1"/><path d="M4.5 1 L8 4.5" stroke="#555"/><path d="M12.5 6 C14.5 8 15 9.5 13.5 11.5" stroke="#2b6cc4" stroke-width="1.6"/></svg>
<div class="r" style="left:637px;top:597px;width:16px;height:4px;background:#ffff00;"></div>
<svg class="r" style="left:658.5px;top:591px" width="5" height="3" viewBox="0 0 5 3"><path d="M0 0 H5 L2.5 3Z" fill="#555"/></svg>
<span class="t" style="left:673.00px;top:590.65px;font-size:14px;color:#444;">A</span>
<div class="r" style="left:671px;top:597px;width:16px;height:4px;background:#ff0000;"></div>
<svg class="r" style="left:692.5px;top:591px" width="5" height="3" viewBox="0 0 5 3"><path d="M0 0 H5 L2.5 3Z" fill="#555"/></svg>
<span class="t" style="left:584.00px;top:623.84px;font-size:12px;letter-spacing:-0.670px;color:#262626;">Font</span>
<svg class="r" style="left:695px;top:621px" width="7" height="7" viewBox="0 0 8 8" fill="none" stroke="#777" stroke-width="1.100"><path d="M0.5 5 V0.5 H5"/><path d="M3 3 L7 7 M7.5 4 V7.5 H4"/></svg>
<div class="r" style="left:706px;top:544px;width:1px;height:84px;background:#d2d2d2;"></div>
<div class="r" style="left:733px;top:551px;width:22px;height:23px;background:#c6c6c6;"></div>
<div class="r" style="left:711px;top:582px;width:22px;height:23px;background:#c6c6c6;"></div>
<div class="r" style="left:839px;top:551px;width:81px;height:23px;background:#c6c6c6;"></div>
<div class="r" style="left:715px;top:554px;width:14px;height:1px;background:#444;"></div><div class="r" style="left:715px;top:557px;width:14px;height:1px;background:#444;"></div><div class="r" style="left:715px;top:560px;width:14px;height:1px;background:#444;"></div>
<div class="r" style="left:737px;top:558px;width:14px;height:1px;background:#444;"></div><div class="r" style="left:737px;top:561px;width:14px;height:1px;background:#444;"></div><div class="r" style="left:737px;top:564px;width:14px;height:1px;background:#444;"></div>
<div class="r" style="left:759px;top:563px;width:14px;height:1px;background:#444;"></div><div class="r" style="left:759px;top:566px;width:14px;height:1px;background:#444;"></div><div class="r" style="left:759px;top:569px;width:14px;height:1px;background:#444;"></div>
<div class="r" style="left:781px;top:551px;width:1px;height:22px;background:#d2d2d2;"></div>
<div class="r" style="left:781px;top:582px;width:1px;height:22px;background:#d2d2d2;"></div>
<svg class="r" style="left:787px;top:552px" width="20" height="20" viewBox="0 0 20 20" fill="none"><text x="0" y="0" transform="translate(3.500 14) rotate(-45)" font-family="Liberation Sans" font-size="10.500" fill="#444">ab</text><path d="M8 17 L17.500 7.500 M13.300 7.300 L17.700 7.300 L17.700 11.700" stroke="#555" stroke-width="1.100"/></svg>
<svg class="r" style="left:809.5px;top:561px" width="5" height="3" viewBox="0 0 5 3"><path d="M0 0 H5 L2.5 3Z" fill="#555"/></svg>
<div class="r" style="left:715px;top:588px;width:14px;height:1px;background:#444;"></div><div class="r" style="left:715px;top:591px;width:9px;height:1px;background:#444;"></div><div class="r" style="left:715px;top:594px;width:14px;height:1px;background:#444;"></div><div class="r" style="left:715px;top:597px;width:9px;height:1px;background:#444;"></div>
<div class="r" style="left:737.0px;top:588px;width:14px;height:1px;background:#444;"></div><div class="r" style="left:739.0px;top:591px;width:10px;height:1px;background:#444;"></div><div class="r" style="left:737.0px;top:594px;width:14px;height:1px;background:#444;"></div><div class="r" style="left:739.0px;top:597px;width:10px;height:1px;background:#444;"></div>
<div class="r" style="left:759px;top:588px;width:14px;height:1px;background:#444;"></div><div class="r" style="left:764px;top:591px;width:9px;height:1px;background:#444;"></div><div class="r" style="left:759px;top:594px;width:14px;height:1px;background:#444;"></div><div class="r" style="left:764px;top:597px;width:9px;height:1px;background:#444;"></div>
<svg class="r" style="left:789px;top:586px" width="17" height="14" viewBox="0 0 17 14" fill="none"><path d="M0 0.500 H16 M10 3.500 H16 M10 6.500 H16 M10 9.500 H16 M0 12.500 H16" stroke="#555" stroke-width="1"/><path d="M7.500 6.500 H1 M3.600 3.700 L0.800 6.500 L3.600 9.300" stroke="#2b6cc4" stroke-width="1.500"/></svg>
<svg class="r" style="left:811px;top:586px" width="17" height="14" viewBox="0 0 17 14" fill="none"><path d="M0 0.500 H16 M10 3.500 H16 M10 6.500 H16 M10 9.500 H16 M0 12.500 H16" stroke="#555" stroke-width="1"/><path d="M0 6.500 H6.500 M3.900 3.700 L6.700 6.500 L3.900 9.300" stroke="#2b6cc4" stroke-width="1.500"/></svg>
<div class="r" style="left:834px;top:550px;width:1px;height:55px;background:#d2d2d2;"></div>
<span class="t" style="left:844.00px;top:557.83px;font-size:10px;color:#444;">ab</span>
<span class="t" style="left:844.30px;top:565.13px;font-size:10px;color:#444;">c</span>
<svg class="r" style="left:850.500px;top:563.500px" width="6" height="5" viewBox="0 0 6 5" fill="none" stroke="#2b6cc4" stroke-width="1"><path d="M5 0 V2.800 H1 M2.500 1 L0.700 2.800 L2.500 4.600"/></svg>
<span class="t" style="left:861.00px;top:562.84px;font-size:12px;letter-spacing:-0.197px;color:#262626;">Wrap Text</span>
<svg class="r" style="left:842px;top:585px" width="15" height="15" viewBox="0 0 15 15" fill="none" stroke="#666" stroke-width="1"><rect x="0.500" y="0.500" width="14" height="14"/><path d="M0.500 4.500 H14.500 M0.500 10.500 H14.500 M5.500 0.500 V4.500 M9.500 0.500 V4.500 M5.500 10.500 V14.500 M9.500 10.500 V14.500"/><path d="M2.800 7.500 H12.200 M4.500 5.800 L2.800 7.500 L4.500 9.200 M10.500 5.800 L12.200 7.500 L10.500 9.200" stroke="#2b6cc4"/></svg>
<span class="t" style="left:861.00px;top:593.84px;font-size:12px;letter-spacing:0.023px;color:#262626;">Merge &amp; Center</span>
<svg class="r" style="left:956.5px;top:592px" width="5" height="3" viewBox="0 0 5 3"><path d="M0 0 H5 L2.5 3Z" fill="#555"/></svg>
<span class="t" style="left:804.00px;top:623.84px;font-size:12px;letter-spacing:-0.045px;color:#262626;">Alignment</span>
<svg class="r" style="left:959px;top:621px" width="7" height="7" viewBox="0 0 8 8" fill="none" stroke="#777" stroke-width="1.100"><path d="M0.5 5 V0.5 H5"/><path d="M3 3 L7 7 M7.5 4 V7.5 H4"/></svg>
<div class="r" style="left:970px;top:544px;width:1px;height:84px;background:#d2d2d2;"></div>
<div class="r" style="left:975px;top:551px;width:131px;height:23px;background:#fff;border:1px solid #c6c6c6;box-sizing:border-box;"></div>
<span class="t" style="left:978.00px;top:562.84px;font-size:12px;letter-spacing:-0.532px;color:#262626;">General</span>
<svg class="r" style="left:1095.5px;top:562px" width="5" height="3" viewBox="0 0 5 3"><path d="M0 0 H5 L2.5 3Z" fill="#555"/></svg>
<span class="t" style="left:982.00px;top:593.80px;font-size:15px;color:#444;">$</span>
<svg class="r" style="left:1000.0px;top:592px" width="5" height="3" viewBox="0 0 5 3"><path d="M0 0 H5 L2.5 3Z" fill="#555"/></svg>
<span class="t" style="left:1014.00px;top:593.30px;font-size:15px;color:#444;">%</span>
<span class="t se b" style="left:1038.50px;top:588.56px;font-size:17px;color:#444;">,</span>
<div class="r" style="left:1057px;top:583px;width:1px;height:21px;background:#d2d2d2;"></div>
<span class="t" style="left:1071.50px;top:588.58px;font-size:9px;letter-spacing:0.495px;color:#444;">.0</span>
<span class="t" style="left:1067.50px;top:595.88px;font-size:9px;letter-spacing:-0.255px;color:#444;">.00</span>
<svg class="r" style="left:1064.500px;top:586.500px" width="7" height="6" viewBox="0 0 7 6" fill="none" stroke="#2b6cc4" stroke-width="1.1"><path d="M7 3 H1 M3 0.8 L0.8 3 L3 5.2"/></svg>
<span class="t" style="left:1089.40px;top:588.58px;font-size:9px;letter-spacing:-0.255px;color:#444;">.00</span>
<span class="t" style="left:1094.30px;top:595.88px;font-size:9px;letter-spacing:0.495px;color:#444;">.0</span>
<svg class="r" style="left:1086.500px;top:594px" width="7" height="6" viewBox="0 0 7 6" fill="none" stroke="#2b6cc4" stroke-width="1.1"><path d="M0 3 H6 M4 0.8 L6.2 3 L4 5.2"/></svg>
<span class="t" style="left:1012.50px;top:623.84px;font-size:12px;letter-spacing:-0.436px;color:#262626;">Number</span>
<svg class="r" style="left:1099px;top:621px" width="7" height="7" viewBox="0 0 8 8" fill="none" stroke="#777" stroke-width="1.100"><path d="M0.5 5 V0.5 H5"/><path d="M3 3 L7 7 M7.5 4 V7.5 H4"/></svg>
<div class="r" style="left:1110px;top:544px;width:1px;height:84px;background:#d2d2d2;"></div>
<svg class="r" style="left:1137px;top:548px" width="31" height="31" viewBox="0 0 31 31" fill="none"><rect x="0.5" y="0.5" width="27" height="24" fill="#fff" stroke="#8a8a8a"/><path d="M7.2 0.5 V24.5" stroke="#8a8a8a"/><path d="M14.0 0.5 V24.5" stroke="#8a8a8a"/><path d="M20.8 0.5 V24.5" stroke="#8a8a8a"/><path d="M0.5 6.5 H27.5" stroke="#8a8a8a"/><path d="M0.5 12.5 H27.5" stroke="#8a8a8a"/><path d="M0.5 18.5 H27.5" stroke="#8a8a8a"/><rect x="8" y="1" width="6" height="5" fill="#e0603c"/><rect x="8" y="7" width="10" height="5" fill="#3f7fc9"/><rect x="8" y="13" width="8" height="5" fill="#e0603c"/><rect x="8" y="19" width="4" height="5" fill="#3f7fc9"/><rect x="14.500" y="17.500" width="15" height="12" fill="#fff" stroke="#666"/><path d="M18 21.5 H26 M18 25 H26 M24.500 19.500 L19.500 27.500" stroke="#444" stroke-width="1.1"/></svg>
<span class="t" style="left:1120.50px;top:588.84px;font-size:12px;letter-spacing:0.146px;color:#262626;">Conditional</span>
<span class="t" style="left:1117.00px;top:604.84px;font-size:12px;letter-spacing:0.128px;color:#262626;">Formatting</span>
<svg class="r" style="left:1179.0px;top:603px" width="5" height="3" viewBox="0 0 5 3"><path d="M0 0 H5 L2.5 3Z" fill="#555"/></svg>
<svg class="r" style="left:1201px;top:548px" width="31" height="31" viewBox="0 0 31 31" fill="none"><rect x="1.5" y="2.5" width="24" height="20" fill="#fff" stroke="#8a8a8a"/><path d="M7.5 2.5 V22.5" stroke="#8a8a8a"/><path d="M13.5 2.5 V22.5" stroke="#8a8a8a"/><path d="M19.5 2.5 V22.5" stroke="#8a8a8a"/><path d="M1.5 7.5 H25.5" stroke="#8a8a8a"/><path d="M1.5 12.5 H25.5" stroke="#8a8a8a"/><path d="M1.5 17.5 H25.5" stroke="#8a8a8a"/><rect x="8" y="8" width="17" height="14" fill="#bcd4ee"/><rect x="1.5" y="2.5" width="24" height="20" fill="none" stroke="#8a8a8a"/><path d="M7.5 2.5 V22.5" stroke="#8a8a8a"/><path d="M13.5 2.5 V22.5" stroke="#8a8a8a"/><path d="M19.5 2.5 V22.5" stroke="#8a8a8a"/><path d="M1.5 7.5 H25.5" stroke="#8a8a8a"/><path d="M1.5 12.5 H25.5" stroke="#8a8a8a"/><path d="M1.5 17.5 H25.5" stroke="#8a8a8a"/><g transform="translate(5.3,5.6) scale(1.3)"><path d="M16 0 L19 3 L11 12 L8 9Z" fill="#777"/><path d="M8 9 L11 12 C10 17 5 18 0 17 C4 15 3 10 8 9Z" fill="#3f7fc9"/></g></svg>
<span class="t" style="left:1189.00px;top:588.84px;font-size:12px;letter-spacing:-0.252px;color:#262626;">Format as</span>
<span class="t" style="left:1198.00px;top:604.84px;font-size:12px;letter-spacing:-0.421px;color:#262626;">Table</span>
<svg class="r" style="left:1228.0px;top:603px" width="5" height="3" viewBox="0 0 5 3"><path d="M0 0 H5 L2.5 3Z" fill="#555"/></svg>
<svg class="r" style="left:1252px;top:548px" width="31" height="31" viewBox="0 0 31 31" fill="none"><rect x="1.5" y="2.5" width="24" height="20" fill="#fff" stroke="#8a8a8a"/><path d="M9.5 2.5 V22.5" stroke="#8a8a8a"/><path d="M17.5 2.5 V22.5" stroke="#8a8a8a"/><path d="M1.5 9.2 H25.5" stroke="#8a8a8a"/><path d="M1.5 15.8 H25.5" stroke="#8a8a8a"/><rect x="4" y="7" width="18" height="9" fill="#bcd4ee" stroke="#8a8a8a"/><g transform="translate(5.3,5.6) scale(1.3)"><path d="M16 0 L19 3 L11 12 L8 9Z" fill="#777"/><path d="M8 9 L11 12 C10 17 5 18 0 17 C4 15 3 10 8 9Z" fill="#3f7fc9"/></g></svg>
<span class="t" style="left:1255.00px;top:588.84px;font-size:12px;letter-spacing:-0.390px;color:#262626;">Cell</span>
<span class="t" style="left:1246.00px;top:604.84px;font-size:12px;letter-spacing:-0.536px;color:#262626;">Styles</span>
<svg class="r" style="left:1279.5px;top:603px" width="5" height="3" viewBox="0 0 5 3"><path d="M0 0 H5 L2.5 3Z" fill="#555"/></svg>
<span class="t" style="left:1186.00px;top:623.84px;font-size:12px;letter-spacing:-0.836px;color:#262626;">Styles</span>
<div class="r" style="left:1291px;top:544px;width:1px;height:84px;background:#d2d2d2;"></div>
<svg class="r" style="left:1304px;top:548px" width="28" height="28" viewBox="0 0 28 28" fill="none"><rect x="0.5" y="0.5" width="14" height="5" fill="#fff" stroke="#8a8a8a"/><path d="M7.5 0.5 V5.5" stroke="#8a8a8a"/><rect x="0.5" y="16.5" width="14" height="10" fill="#fff" stroke="#8a8a8a"/><path d="M7.5 16.5 V26.5" stroke="#8a8a8a"/><path d="M0.5 21.5 H14.5" stroke="#8a8a8a"/><rect x="11.500" y="8.500" width="14" height="5" fill="#bcd4ee" stroke="#8a8a8a"/><path d="M18.500 8.500 V13.500" stroke="#8a8a8a"/><path d="M8 11 H1.500 M4.200 8.200 L1.500 11 L4.200 13.800" stroke="#2b6cc4" stroke-width="1.5"/></svg>
<span class="t" style="left:1302.00px;top:588.84px;font-size:12px;letter-spacing:-0.302px;color:#262626;">Insert</span>
<svg class="r" style="left:1313.5px;top:603px" width="5" height="3" viewBox="0 0 5 3"><path d="M0 0 H5 L2.5 3Z" fill="#555"/></svg>
<svg class="r" style="left:1345px;top:548px" width="30" height="28" viewBox="0 0 30 28" fill="none"><rect x="0.5" y="0.5" width="14" height="5" fill="#fff" stroke="#8a8a8a"/><path d="M7.5 0.5 V5.5" stroke="#8a8a8a"/><rect x="0.5" y="16.5" width="14" height="10" fill="#fff" stroke="#8a8a8a"/><path d="M7.5 16.5 V26.5" stroke="#8a8a8a"/><path d="M0.5 21.5 H14.5" stroke="#8a8a8a"/><rect x="6.500" y="8.500" width="9" height="5" fill="#bcd4ee" stroke="#8a8a8a"/><path d="M16 6 L28 18 M28 6 L16 18" stroke="#e0603c" stroke-width="1.8"/></svg>
<span class="t" style="left:1342.00px;top:588.84px;font-size:12px;letter-spacing:-0.337px;color:#262626;">Delete</span>
<svg class="r" style="left:1355.5px;top:603px" width="5" height="3" viewBox="0 0 5 3"><path d="M0 0 H5 L2.5 3Z" fill="#555"/></svg>
<svg class="r" style="left:1387px;top:546px" width="29" height="32" viewBox="0 0 29 32" fill="none"><path d="M1.500 0 V6 M22.500 0 V6 M2.500 3 H21.500 M4.500 1 L2.500 3 L4.500 5 M19.500 1 L21.500 3 L19.500 5" stroke="#2b6cc4" stroke-width="1"/><rect x="0.5" y="8.5" width="27" height="21" fill="#fff" stroke="#8a8a8a"/><path d="M7.2 8.5 V29.5" stroke="#8a8a8a"/><path d="M14.0 8.5 V29.5" stroke="#8a8a8a"/><path d="M20.8 8.5 V29.5" stroke="#8a8a8a"/><path d="M0.5 15.5 H27.5" stroke="#8a8a8a"/><path d="M0.5 22.5 H27.5" stroke="#8a8a8a"/><rect x="8" y="13" width="7" height="9" fill="#3f7fc9"/><path d="M1 30 H8 L11 27.500 H16 L13 30" stroke="#8a8a8a" fill="#fff"/></svg>
<span class="t" style="left:1382.00px;top:588.84px;font-size:12px;color:#262626;">Format</span>
<svg class="r" style="left:1398.5px;top:603px" width="5" height="3" viewBox="0 0 5 3"><path d="M0 0 H5 L2.5 3Z" fill="#555"/></svg>
<span class="t" style="left:1347.50px;top:623.84px;font-size:12px;letter-spacing:-0.918px;color:#262626;">Cells</span>
<div class="r" style="left:1427px;top:544px;width:1px;height:84px;background:#d2d2d2;"></div>
<svg class="r" style="left:1435px;top:546px" width="15" height="16" viewBox="0 0 15 16" fill="none" stroke="#444" stroke-width="1.7"><path d="M14 3.5 V1 H1.5 L8 8 L1.5 15 H14 V12.5"/></svg>
<span class="t" style="left:1454.00px;top:554.84px;font-size:12px;letter-spacing:0.023px;color:#262626;">AutoSum</span>
<svg class="r" style="left:1513.5px;top:554px" width="5" height="3" viewBox="0 0 5 3"><path d="M0 0 H5 L2.5 3Z" fill="#555"/></svg>
<svg class="r" style="left:1436px;top:569px" width="15" height="17" viewBox="0 0 15 17" fill="none"><rect x="0.5" y="0.5" width="14" height="3" fill="#777" stroke="#777"/><rect x="0.5" y="4.5" width="14" height="12" fill="#fff" stroke="#777"/><path d="M7.5 6.5 V13.5 M4.5 10.5 L7.5 13.5 L10.5 10.5" stroke="#2b6cc4" stroke-width="1.6"/></svg>
<span class="t" style="left:1454.00px;top:577.84px;font-size:12px;letter-spacing:-0.109px;color:#262626;">Fill</span>
<svg class="r" style="left:1472.0px;top:577px" width="5" height="3" viewBox="0 0 5 3"><path d="M0 0 H5 L2.5 3Z" fill="#555"/></svg>
<svg class="r" style="left:1436px;top:592px" width="15" height="15" viewBox="0 0 15 15"><path d="M1 10 L9 2 L13.5 6.5 L5.5 14.5 Z" fill="#f08a9b"/><path d="M1 10 L3.5 7.5 L8 12 L5.5 14.5Z" fill="#f3a8b4"/></svg>
<span class="t" style="left:1454.00px;top:600.84px;font-size:12px;letter-spacing:-0.419px;color:#262626;">Clear</span>
<svg class="r" style="left:1484.0px;top:600px" width="5" height="3" viewBox="0 0 5 3"><path d="M0 0 H5 L2.5 3Z" fill="#555"/></svg>
<span class="t" style="left:1530.00px;top:555.46px;font-size:16px;color:#2b6cc4;">A</span>
<span class="t" style="left:1531.00px;top:569.76px;font-size:16px;color:#9b59c4;">Z</span>
<svg class="r" style="left:1542px;top:556px" width="18" height="15" viewBox="0 0 18 15"><path d="M0.5 0.5 H17.5 L11 7.5 V14.5 L7.5 12.5 V7.5 Z" fill="#8a8a8a"/></svg>
<span class="t" style="left:1528.00px;top:588.84px;font-size:12px;letter-spacing:0.130px;color:#262626;">Sort &amp;</span>
<span class="t" style="left:1528.40px;top:604.84px;font-size:12px;letter-spacing:-0.213px;color:#262626;">Filter</span>
<svg class="r" style="left:1557.0px;top:603px" width="5" height="3" viewBox="0 0 5 3"><path d="M0 0 H5 L2.5 3Z" fill="#555"/></svg>
<svg class="r" style="left:1573px;top:547px" width="29" height="29" viewBox="0 0 29 29" fill="none"><circle cx="18.5" cy="10.5" r="8.5" stroke="#3f7fc9" stroke-width="2.2" fill="#fff"/><path d="M12.3 16.7 L2.5 26.5" stroke="#3f7fc9" stroke-width="3.2"/></svg>
<span class="t" style="left:1570.40px;top:588.84px;font-size:12px;letter-spacing:0.104px;color:#262626;">Find &amp;</span>
<span class="t" style="left:1568.00px;top:604.84px;font-size:12px;letter-spacing:-0.470px;color:#262626;">Select</span>
<svg class="r" style="left:1602.0px;top:603px" width="5" height="3" viewBox="0 0 5 3"><path d="M0 0 H5 L2.5 3Z" fill="#555"/></svg>
<span class="t" style="left:1502.40px;top:623.84px;font-size:12px;letter-spacing:-0.098px;color:#262626;">Editing</span>
<div class="r" style="left:1614px;top:544px;width:1px;height:84px;background:#d2d2d2;"></div>
<svg class="r" style="left:1686px;top:620px" width="11" height="7" viewBox="0 0 11 7" fill="none" stroke="#555" stroke-width="1.4"><path d="M1 6 L5.5 1.5 L10 6"/></svg>
<div class="r" style="left:347px;top:643px;width:102px;height:26px;background:#fff;border:1px solid #d0d0d0;box-sizing:border-box;"></div>
<span class="t" style="left:354.00px;top:656.84px;font-size:12px;letter-spacing:1.322px;color:#262626;">A4</span>
<svg class="r" style="left:435.0px;top:653px" width="7" height="4" viewBox="0 0 7 4"><path d="M0 0 H7 L3.5 4Z" fill="#555"/></svg>
<div class="r" style="left:463px;top:651px;width:2px;height:2px;background:#a6a6a6;"></div>
<div class="r" style="left:463px;top:655px;width:2px;height:2px;background:#a6a6a6;"></div>
<div class="r" style="left:463px;top:659px;width:2px;height:2px;background:#a6a6a6;"></div>
<div class="r" style="left:479px;top:643px;width:110px;height:26px;background:#fff;border:1px solid #d0d0d0;box-sizing:border-box;"></div>
<svg class="r" style="left:492px;top:651px" width="12" height="11" viewBox="0 0 12 11" stroke="#bdbdbd" stroke-width="1.800"><path d="M1 0.5 L11 10.5 M11 0.5 L1 10.5"/></svg>
<svg class="r" style="left:527px;top:651px" width="14" height="11" viewBox="0 0 14 11" fill="none" stroke="#c4c4c4" stroke-width="2.200"><path d="M1 6 L5 10 L13 1"/></svg>
<span class="t se b i" style="left:564.00px;top:656.44px;font-size:15px;color:#555;">f</span>
<span class="t se b i" style="left:569.50px;top:658.62px;font-size:10px;color:#555;">x</span>
<div class="r" style="left:592px;top:643px;width:1109px;height:26px;background:#fff;border:1px solid #d0d0d0;box-sizing:border-box;"></div>
<span class="t" style="left:604.00px;top:656.84px;font-size:12px;letter-spacing:0.281px;color:#262626;">CSAN1001</span>
<svg class="r" style="left:1688.500px;top:652.500px" width="8" height="6" viewBox="0 0 8 6" fill="none" stroke="#555" stroke-width="1.900"><path d="M0.800 0.800 L4 4.200 L7.200 0.800"/></svg>
<div class="r" style="left:423px;top:701px;width:1261px;height:620px;background:#fff;"></div>
<div class="r" style="left:342px;top:679px;width:1344px;height:21px;background:#e6e6e6;"></div>
<div class="r" style="left:422px;top:679px;width:125px;height:21px;background:#d2d2d2;"></div>
<div class="r" style="left:422px;top:698px;width:126px;height:2px;background:#217346;"></div>
<div class="r" style="left:547px;top:679px;width:1px;height:21px;background:#b1b1b1;"></div>
<div class="r" style="left:672px;top:679px;width:1px;height:21px;background:#b1b1b1;"></div>
<div class="r" style="left:828px;top:679px;width:1px;height:21px;background:#b1b1b1;"></div>
<div class="r" style="left:959px;top:679px;width:1px;height:21px;background:#b1b1b1;"></div>
<div class="r" style="left:1100px;top:679px;width:1px;height:21px;background:#b1b1b1;"></div>
<div class="r" style="left:1232px;top:679px;width:1px;height:21px;background:#b1b1b1;"></div>
<div class="r" style="left:1372px;top:679px;width:1px;height:21px;background:#b1b1b1;"></div>
<div class="r" style="left:1496px;top:679px;width:1px;height:21px;background:#b1b1b1;"></div>
<div class="r" style="left:1615px;top:679px;width:1px;height:21px;background:#b1b1b1;"></div>
<div class="r" style="left:389px;top:700px;width:1297px;height:1px;background:#9b9b9b;"></div>
<span class="t se" style="left:479.72px;top:691.10px;font-size:16px;color:#217346;">A</span>
<span class="t se" style="left:604.66px;top:691.10px;font-size:16px;color:#000;">B</span>
<span class="t se" style="left:745.16px;top:691.10px;font-size:16px;color:#000;">C</span>
<span class="t se" style="left:888.22px;top:691.10px;font-size:16px;color:#000;">D</span>
<span class="t se" style="left:1025.11px;top:691.10px;font-size:16px;color:#000;">E</span>
<span class="t se" style="left:1162.05px;top:691.10px;font-size:16px;color:#000;">F</span>
<span class="t se" style="left:1296.72px;top:691.10px;font-size:16px;color:#000;">G</span>
<span class="t se" style="left:1428.72px;top:691.10px;font-size:16px;color:#000;">H</span>
<span class="t se" style="left:1553.34px;top:691.10px;font-size:16px;color:#000;">I</span>
<span class="t se" style="left:1651.89px;top:691.10px;font-size:16px;color:#000;">J</span>
<div class="r" style="left:344px;top:679px;width:21px;height:21px;background:#e6e6e6;border:1px solid #808894;box-sizing:border-box;"></div>
<div class="r" style="left:365px;top:679px;width:21px;height:21px;background:#e6e6e6;border:1px solid #808894;box-sizing:border-box;"></div>
<span class="t" style="left:352.00px;top:690.53px;font-size:10px;color:#444;">1</span>
<span class="t" style="left:372.50px;top:690.53px;font-size:10px;color:#444;">2</span>
<svg class="r" style="left:405.500px;top:683.500px" width="13.500" height="13.500" viewBox="0 0 14 14"><path d="M14 0 V14 H0Z" fill="#b4b4b4"/></svg>
<div class="r" style="left:351px;top:702px;width:6px;height:2px;background:#949494;"></div>
<div class="r" style="left:351px;top:702px;width:2px;height:207px;background:#949494;"></div>
<div class="r" style="left:344px;top:908px;width:21px;height:21px;background:#e6e6e6;border:1px solid #808894;box-sizing:border-box;"></div>
<div class="r" style="left:351px;top:918px;width:8px;height:2px;background:#555;"></div>
<div class="r" style="left:373px;top:795px;width:1px;height:1px;background:#666;"></div>
<div class="r" style="left:422px;top:701px;width:1px;height:620px;background:#9b9b9b;"></div>
<div class="r" style="left:389px;top:996px;width:33px;height:25px;background:#d2d2d2;"></div>
<div class="r" style="left:421px;top:996px;width:2px;height:26px;background:#217346;"></div>
<span class="t se" style="left:401.70px;top:882.00px;font-size:16px;color:#000;">1</span>
<span class="t se" style="left:401.70px;top:937.00px;font-size:16px;color:#000;">2</span>
<span class="t se" style="left:401.70px;top:987.00px;font-size:16px;color:#000;">3</span>
<span class="t se" style="left:401.70px;top:1011.80px;font-size:16px;color:#217346;">4</span>
<span class="t se" style="left:401.70px;top:1036.80px;font-size:16px;color:#000;">5</span>
<span class="t se" style="left:401.70px;top:1061.80px;font-size:16px;color:#000;">6</span>
<span class="t se" style="left:401.70px;top:1086.80px;font-size:16px;color:#000;">7</span>
<span class="t se" style="left:401.70px;top:1111.80px;font-size:16px;color:#000;">8</span>
<span class="t se" style="left:401.70px;top:1136.80px;font-size:16px;color:#000;">9</span>
<span class="t se" style="left:393.70px;top:1161.80px;font-size:16px;color:#000;">10</span>
<span class="t se" style="left:394.29px;top:1186.80px;font-size:16px;color:#000;">11</span>
<span class="t se" style="left:393.70px;top:1211.80px;font-size:16px;color:#000;">12</span>
<span class="t se" style="left:393.70px;top:1236.80px;font-size:16px;color:#000;">13</span>
<span class="t se" style="left:393.70px;top:1261.80px;font-size:16px;color:#000;">14</span>
<span class="t se" style="left:393.70px;top:1286.80px;font-size:16px;color:#000;">15</span>
<span class="t se" style="left:393.70px;top:1311.80px;font-size:16px;color:#000;">16</span>
<div class="r" style="left:389px;top:891px;width:33px;height:1px;background:#b1b1b1;"></div>
<div class="r" style="left:389px;top:946px;width:33px;height:1px;background:#b1b1b1;"></div>
<div class="r" style="left:389px;top:996px;width:33px;height:1px;background:#b1b1b1;"></div>
<div class="r" style="left:389px;top:1021px;width:33px;height:1px;background:#b1b1b1;"></div>
<div class="r" style="left:389px;top:1046px;width:33px;height:1px;background:#b1b1b1;"></div>
<div class="r" style="left:389px;top:1071px;width:33px;height:1px;background:#b1b1b1;"></div>
<div class="r" style="left:389px;top:1096px;width:33px;height:1px;background:#b1b1b1;"></div>
<div class="r" style="left:389px;top:1121px;width:33px;height:1px;background:#b1b1b1;"></div>
<div class="r" style="left:389px;top:1146px;width:33px;height:1px;background:#b1b1b1;"></div>
<div class="r" style="left:389px;top:1171px;width:33px;height:1px;background:#b1b1b1;"></div>
<div class="r" style="left:389px;top:1196px;width:33px;height:1px;background:#b1b1b1;"></div>
<div class="r" style="left:389px;top:1221px;width:33px;height:1px;background:#b1b1b1;"></div>
<div class="r" style="left:389px;top:1246px;width:33px;height:1px;background:#b1b1b1;"></div>
<div class="r" style="left:389px;top:1271px;width:33px;height:1px;background:#b1b1b1;"></div>
<div class="r" style="left:389px;top:1296px;width:33px;height:1px;background:#b1b1b1;"></div>
<div class="r" style="left:1616px;top:891px;width:68px;height:1px;background:#d4d4d4;"></div>
<div class="r" style="left:1616px;top:946px;width:68px;height:1px;background:#d4d4d4;"></div>
<div class="r" style="left:1616px;top:996px;width:68px;height:1px;background:#d4d4d4;"></div>
<div class="r" style="left:1616px;top:1021px;width:68px;height:1px;background:#d4d4d4;"></div>
<div class="r" style="left:1616px;top:1046px;width:68px;height:1px;background:#d4d4d4;"></div>
<div class="r" style="left:1616px;top:1071px;width:68px;height:1px;background:#d4d4d4;"></div>
<div class="r" style="left:1616px;top:1096px;width:68px;height:1px;background:#d4d4d4;"></div>
<div class="r" style="left:1616px;top:1121px;width:68px;height:1px;background:#d4d4d4;"></div>
<div class="r" style="left:1616px;top:1146px;width:68px;height:1px;background:#d4d4d4;"></div>
<div class="r" style="left:1616px;top:1171px;width:68px;height:1px;background:#d4d4d4;"></div>
<div class="r" style="left:1616px;top:1196px;width:68px;height:1px;background:#d4d4d4;"></div>
<div class="r" style="left:1616px;top:1221px;width:68px;height:1px;background:#d4d4d4;"></div>
<div class="r" style="left:1616px;top:1246px;width:68px;height:1px;background:#d4d4d4;"></div>
<div class="r" style="left:1616px;top:1271px;width:68px;height:1px;background:#d4d4d4;"></div>
<div class="r" style="left:1616px;top:1296px;width:68px;height:1px;background:#d4d4d4;"></div>
<div class="r" style="left:1615px;top:892px;width:1px;height:429px;background:#d4d4d4;"></div>
<div class="r" style="left:423px;top:701px;width:1193px;height:191px;background:#c6e0b4;"></div>
<span class="t se b" style="left:426.00px;top:714.75px;font-size:20px;letter-spacing:0.284px;"><span style="color:#ff0000">(*) Lưu ý:</span></span>
<span class="t se" style="left:426.00px;top:741.75px;font-size:20px;letter-spacing:0.247px;"><span style="color:#000">- Các cột đánh dấu </span><span style="color:#ff0000">(*)</span><span style="color:#000"> là cột thông tin </span><span style="color:#ff0000">bắt buộc;</span></span>
<span class="t se" style="left:426.00px;top:768.75px;font-size:20px;letter-spacing:0.224px;"><span style="color:#000">- Dòng thông tin thiết bị đầu tiên là dòng </span><span style="color:#ff0000">dữ liệu nhập mẫu</span><span style="color:#000">, người dùng có thể </span><span style="color:#ff0000">xóa</span><span style="color:#000"> đi nếu thấy không cần thiết</span></span>
<span class="t se" style="left:426.00px;top:795.75px;font-size:20px;letter-spacing:0.239px;"><span style="color:#000">- </span><span style="color:#ff0000">Mã thống kê:</span><span style="color:#000"> là mã thiết bị theo Danh mục thiết bị dạy học tối thiểu do BGD&amp;ĐT/SGD&amp;ĐT/PGD&amp;ĐT ban hành;</span></span>
<span class="t se" style="left:426.00px;top:822.75px;font-size:20px;letter-spacing:0.212px;"><span style="color:#000">- Cột </span><span style="color:#ff0000">&quot;Mã thống kê&quot;</span><span style="color:#000"> dành cho trường có nhu cầu quản lý, báo cáo, thống kê mã thiết bị theo Danh mục thiết bị dạy học tối thiểu, thông tin </span><span style="color:#ff0000">Mã</span></span>
<span class="t se" style="left:426.00px;top:849.75px;font-size:20px;letter-spacing:0.161px;"><span style="color:#ff0000">thống kê</span><span style="color:#000"> và </span><span style="color:#ff0000">Mã thiết bị</span><span style="color:#000"> có thể khác nhau;</span></span>
<span class="t se" style="left:426.00px;top:876.75px;font-size:20px;letter-spacing:0.254px;"><span style="color:#000">- 01 thiết bị thuộc </span><span style="color:#ff0000">nhiều Kho/phòng</span><span style="color:#000"> khác nhau phải ghi thành </span><span style="color:#ff0000">nhiều dòng</span><span style="color:#000">, mỗi dòng một Kho/phòng và số lượng tương ứng với Kho/phòng đó.</span></span>
<span class="t se b" style="left:875.40px;top:919.10px;font-size:18.67px;letter-spacing:0.155px;">THÔNG TIN THIẾT BỊ BAN ĐẦU</span>
<div class="r" style="left:423px;top:947px;width:1193px;height:49px;background:#d9d9d9;"></div>
<div class="r" style="left:547px;top:946px;width:1px;height:375px;background:#000;"></div>
<div class="r" style="left:672px;top:946px;width:1px;height:375px;background:#000;"></div>
<div class="r" style="left:828px;top:946px;width:1px;height:375px;background:#000;"></div>
<div class="r" style="left:959px;top:946px;width:1px;height:375px;background:#000;"></div>
<div class="r" style="left:1100px;top:946px;width:1px;height:375px;background:#000;"></div>
<div class="r" style="left:1232px;top:946px;width:1px;height:375px;background:#000;"></div>
<div class="r" style="left:1372px;top:946px;width:1px;height:375px;background:#000;"></div>
<div class="r" style="left:1496px;top:946px;width:1px;height:375px;background:#000;"></div>
<div class="r" style="left:1615px;top:946px;width:1px;height:375px;background:#000;"></div>
<div class="r" style="left:423px;top:946px;width:1193px;height:1px;background:#000;"></div>
<div class="r" style="left:423px;top:996px;width:1193px;height:1px;background:#000;"></div>
<div class="r" style="left:423px;top:1021px;width:1193px;height:1px;background:#000;"></div>
<div class="r" style="left:423px;top:1046px;width:1193px;height:1px;background:#000;"></div>
<div class="r" style="left:423px;top:1071px;width:1193px;height:1px;background:#000;"></div>
<div class="r" style="left:423px;top:1096px;width:1193px;height:1px;background:#000;"></div>
<div class="r" style="left:423px;top:1121px;width:1193px;height:1px;background:#000;"></div>
<div class="r" style="left:423px;top:1146px;width:1193px;height:1px;background:#000;"></div>
<div class="r" style="left:423px;top:1171px;width:1193px;height:1px;background:#000;"></div>
<div class="r" style="left:423px;top:1196px;width:1193px;height:1px;background:#000;"></div>
<div class="r" style="left:423px;top:1221px;width:1193px;height:1px;background:#000;"></div>
<div class="r" style="left:423px;top:1246px;width:1193px;height:1px;background:#000;"></div>
<div class="r" style="left:423px;top:1271px;width:1193px;height:1px;background:#000;"></div>
<div class="r" style="left:423px;top:1296px;width:1193px;height:1px;background:#000;"></div>
<svg class="r" style="left:541px;top:947px" width="6" height="6" viewBox="0 0 6 6"><path d="M0 0 H6 V6Z" fill="#ff0000"/></svg>
<svg class="r" style="left:666px;top:947px" width="6" height="6" viewBox="0 0 6 6"><path d="M0 0 H6 V6Z" fill="#ff0000"/></svg>
<svg class="r" style="left:822px;top:947px" width="6" height="6" viewBox="0 0 6 6"><path d="M0 0 H6 V6Z" fill="#ff0000"/></svg>
<svg class="r" style="left:953px;top:947px" width="6" height="6" viewBox="0 0 6 6"><path d="M0 0 H6 V6Z" fill="#ff0000"/></svg>
<svg class="r" style="left:1094px;top:947px" width="6" height="6" viewBox="0 0 6 6"><path d="M0 0 H6 V6Z" fill="#ff0000"/></svg>
<svg class="r" style="left:1226px;top:947px" width="6" height="6" viewBox="0 0 6 6"><path d="M0 0 H6 V6Z" fill="#ff0000"/></svg>
<svg class="r" style="left:1366px;top:947px" width="6" height="6" viewBox="0 0 6 6"><path d="M0 0 H6 V6Z" fill="#ff0000"/></svg>
<svg class="r" style="left:1490px;top:947px" width="6" height="6" viewBox="0 0 6 6"><path d="M0 0 H6 V6Z" fill="#ff0000"/></svg>
<svg class="r" style="left:1609px;top:947px" width="6" height="6" viewBox="0 0 6 6"><path d="M0 0 H6 V6Z" fill="#ff0000"/></svg>
<span class="t se b" style="left:433.00px;top:972.00px;font-size:18.67px;letter-spacing:0.239px;"><span style="color:#000">Mã thống kê</span></span>
<span class="t se b" style="left:552.00px;top:972.00px;font-size:18.67px;letter-spacing:0.065px;"><span style="color:#000">Mã thiết bị </span><span style="color:#ff0000">(*)</span></span>
<span class="t se b" style="left:690.00px;top:972.00px;font-size:18.67px;letter-spacing:0.050px;"><span style="color:#000">Tên thiết bị </span><span style="color:#ff0000">(*)</span></span>
<span class="t se b" style="left:835.00px;top:972.00px;font-size:18.67px;letter-spacing:0.024px;"><span style="color:#000">Đơn vị tính </span><span style="color:#ff0000">(*)</span></span>
<span class="t se b" style="left:980.00px;top:972.00px;font-size:18.67px;letter-spacing:0.249px;"><span style="color:#000">Số lượng </span><span style="color:#ff0000">(*)</span></span>
<span class="t se b" style="left:1107.50px;top:972.00px;font-size:18.67px;letter-spacing:0.068px;"><span style="color:#000">Kho/phòng </span><span style="color:#ff0000">(*)</span></span>
<span class="t se b" style="left:1252.50px;top:972.00px;font-size:18.67px;letter-spacing:0.083px;"><span style="color:#000">Loại thiết bị</span></span>
<span class="t se b" style="left:1404.00px;top:960.00px;font-size:18.67px;letter-spacing:0.212px;">Đơn giá</span>
<span class="t se b" style="left:1408.00px;top:985.00px;font-size:18.67px;letter-spacing:0.030px;">(VND)</span>
<span class="t se b" style="left:1517.00px;top:960.00px;font-size:18.67px;letter-spacing:0.435px;">Nước sản</span>
<span class="t se b" style="left:1539.50px;top:985.00px;font-size:18.67px;letter-spacing:-0.256px;">xuất</span>
<span class="t se" style="left:426.00px;top:1009.70px;font-size:18.67px;letter-spacing:-0.376px;">CSAN1001</span>
<span class="t se" style="left:550.50px;top:1009.70px;font-size:18.67px;letter-spacing:-0.338px;">TB0001</span>
<span class="t se" style="left:676.00px;top:1009.70px;font-size:18.67px;letter-spacing:-0.123px;">Bản nhạc và lời các</span>
<span class="t se" style="left:832.00px;top:1009.70px;font-size:18.67px;letter-spacing:-0.786px;">Bộ</span>
<span class="t se" style="left:1057.00px;top:1009.70px;font-size:18.67px;letter-spacing:-0.501px;">10.00</span>
<span class="t se" style="left:1104.00px;top:1009.70px;font-size:18.67px;letter-spacing:-0.067px;">Phòng Âm nhạc</span>
<span class="t se" style="left:1237.00px;top:1009.70px;font-size:18.67px;letter-spacing:-0.193px;">Tranh ảnh</span>
<span class="t se" style="left:1443.50px;top:1009.70px;font-size:18.67px;letter-spacing:-0.368px;">25,000</span>
<span class="t se" style="left:1500.00px;top:1009.70px;font-size:18.67px;letter-spacing:-0.354px;">Việt Nam</span>
<div class="r" style="left:1684px;top:701px;width:1px;height:620px;background:#9b9b9b;"></div>
<div class="r" style="left:342px;top:1320px;width:1344px;height:1px;background:#9b9b9b;"></div>
<div class="r" style="left:1688px;top:681px;width:15px;height:15px;background:#fff;border:1px solid #c8c8c8;box-sizing:border-box;"></div>
<svg class="r" style="left:1691.500px;top:686px" width="8" height="5" viewBox="0 0 8 5"><path d="M0 5 L4 0 L8 5Z" fill="#777"/></svg>
<div class="r" style="left:1688px;top:696px;width:15px;height:17px;background:#fff;border:1px solid #c8c8c8;box-sizing:border-box;"></div>
<div class="r" style="left:1688px;top:713px;width:15px;height:593px;background:#dadada;"></div>
<div class="r" style="left:1688px;top:1306px;width:15px;height:15px;background:#fff;border:1px solid #c8c8c8;box-sizing:border-box;"></div>
<svg class="r" style="left:1691.500px;top:1311px" width="8" height="5" viewBox="0 0 8 5"><path d="M0 0 L4 5 L8 0Z" fill="#777"/></svg>
<div class="r" style="left:443px;top:1321px;width:64px;height:22px;background:#fff;"></div>
<div class="r" style="left:442px;top:1321px;width:1px;height:22px;background:#9b9b9b;"></div>
<div class="r" style="left:506px;top:1321px;width:1px;height:22px;background:#9b9b9b;"></div>
<div class="r" style="left:442px;top:1343px;width:65px;height:2px;background:#217346;"></div>
<span class="t b" style="left:454.00px;top:1333.34px;font-size:12px;letter-spacing:0.130px;color:#217346;">Sheet1</span>
<svg class="r" style="left:369px;top:1330px" width="5" height="8" viewBox="0 0 5 8"><path d="M5 0 V8 L0 4Z" fill="#c0c0c0"/></svg>
<svg class="r" style="left:398px;top:1330px" width="5" height="8" viewBox="0 0 5 8"><path d="M0 0 V8 L5 4Z" fill="#c0c0c0"/></svg>
<svg class="r" style="left:540px;top:1326px" width="17" height="17" viewBox="0 0 17 17" fill="none" stroke="#777"><circle cx="8.5" cy="8.500" r="7.500"/><path d="M8.500 4.500 V12.500 M4.500 8.500 H12.500" stroke-width="1.6"/></svg>
<div class="r" style="left:1160px;top:1328px;width:1px;height:2px;background:#999;"></div>
<div class="r" style="left:1160px;top:1333px;width:1px;height:2px;background:#999;"></div>
<div class="r" style="left:1160px;top:1338px;width:1px;height:2px;background:#999;"></div>
<div class="r" style="left:1177px;top:1327px;width:15px;height:15px;background:#fff;border:1px solid #c8c8c8;box-sizing:border-box;"></div>
<svg class="r" style="left:1182px;top:1331px" width="5" height="8" viewBox="0 0 5 8"><path d="M5 0 V8 L0 4Z" fill="#555"/></svg>
<div class="r" style="left:1192px;top:1327px;width:434px;height:15px;background:#fff;border:1px solid #b8b8b8;box-sizing:border-box;"></div>
<div class="r" style="left:1626px;top:1327px;width:44px;height:15px;background:#dadada;"></div>
<div class="r" style="left:1672px;top:1327px;width:15px;height:15px;background:#fff;border:1px solid #c8c8c8;box-sizing:border-box;"></div>
<svg class="r" style="left:1678px;top:1331px" width="5" height="8" viewBox="0 0 5 8"><path d="M0 0 V8 L5 4Z" fill="#555"/></svg>
<div class="r" style="left:342px;top:1348px;width:1364px;height:1px;background:#c6c6c6;"></div>
<div class="r" style="left:342px;top:1349px;width:1364px;height:21px;background:#f3f3f3;"></div>
<span class="t" style="left:349.50px;top:1358.69px;font-size:11px;letter-spacing:-0.324px;color:#333;">Ready</span>
<div class="r" style="left:1409px;top:1349px;width:38px;height:21px;background:#d0d0d0;"></div>
<svg class="r" style="left:1421px;top:1352px" width="14" height="13" viewBox="0 0 14 13" fill="none" stroke="#666"><rect x="0.500" y="0.500" width="13" height="12"/><path d="M0.500 4.500 H13.500 M0.500 8.500 H13.500 M5 0.500 V12.500 M9.500 0.500 V12.500"/></svg>
<svg class="r" style="left:1459px;top:1352px" width="14" height="13" viewBox="0 0 14 13" fill="none" stroke="#666"><rect x="0.500" y="0.500" width="13" height="12"/><rect x="3.500" y="3.500" width="7" height="6"/><path d="M5 5.500 H9 M5 7.500 H9"/></svg>
<svg class="r" style="left:1497px;top:1352px" width="14" height="13" viewBox="0 0 14 13" fill="none" stroke="#666"><rect x="0.500" y="0.500" width="13" height="12"/><path d="M4.500 0.500 V7.500 H13.500 M9.500 0.500 V7.500"/></svg>
<div class="r" style="left:1528px;top:1358px;width:6px;height:2px;background:#555;"></div>
<div class="r" style="left:1538px;top:1359px;width:99px;height:1px;background:#999;"></div>
<div class="r" style="left:1585px;top:1353px;width:5px;height:12px;background:#666;"></div>
<div class="r" style="left:1641px;top:1358px;width:7px;height:2px;background:#555;"></div>
<div class="r" style="left:1643.5px;top:1355.5px;width:2px;height:7px;background:#555;"></div>
<span class="t" style="left:1660.00px;top:1359.19px;font-size:11px;letter-spacing:-0.378px;color:#333;">100%</span>
<div class="r" style="left:423px;top:996px;width:126px;height:2px;background:#217346;"></div>
<div class="r" style="left:547px;top:996px;width:2px;height:23px;background:#217346;"></div>
<div class="r" style="left:545px;top:1018px;width:4px;height:4px;background:#217346;border:1px solid #fff;border-right:none;border-bottom:none;box-sizing:content-box;left:544px;top:1017px;"></div>
<div class="r" style="left:549px;top:1003px;width:16px;height:17px;background:#e9e9e9;border:1px solid #b0b0b0;box-sizing:border-box;"></div>
<svg class="r" style="left:553px;top:1010px" width="8" height="4" viewBox="0 0 8 4"><path d="M0 0 H8 L4 4Z" fill="#555"/></svg>
<div class="r" style="left:565px;top:1028px;width:48px;height:89px;background:#ffffe1;border:1px solid #8a8a8a;box-sizing:border-box;"></div>
<span class="t" style="left:571.00px;top:1038.89px;font-size:11px;letter-spacing:0.663px;color:#666;">bị theo</span>
<span class="t" style="left:567.50px;top:1053.89px;font-size:11px;letter-spacing:0.329px;color:#666;">dạy học</span>
<span class="t" style="left:566.00px;top:1083.89px;font-size:11px;color:#666;">&amp;ĐT/r</span>
<span class="t" style="left:566.00px;top:1098.89px;font-size:11px;color:#666;">nh</span>
<div class="r" style="left:422px;top:1021px;width:143px;height:105px;background:#fff;border:1px solid #000;box-sizing:border-box;"></div>
<div class="r" style="left:423px;top:1022px;width:119px;height:13px;background:#0078d7;"></div>
<span class="t" style="left:427.50px;top:1029.36px;font-size:10.5px;letter-spacing:-0.290px;color:#fff;">CSAN1001</span>
<span class="t" style="left:427.50px;top:1042.36px;font-size:10.5px;letter-spacing:-0.290px;color:#000;">CSAN1002</span>
<span class="t" style="left:427.50px;top:1055.36px;font-size:10.5px;letter-spacing:-0.290px;color:#000;">CSAN2003</span>
<span class="t" style="left:427.50px;top:1068.36px;font-size:10.5px;letter-spacing:-0.290px;color:#000;">CSAN2004</span>
<span class="t" style="left:427.50px;top:1081.36px;font-size:10.5px;letter-spacing:-0.290px;color:#000;">CSAN2005</span>
<span class="t" style="left:427.50px;top:1094.36px;font-size:10.5px;letter-spacing:-0.290px;color:#000;">CSAN2006</span>
<span class="t" style="left:427.50px;top:1107.36px;font-size:10.5px;letter-spacing:-0.290px;color:#000;">CSAN3007</span>
<div class="r" style="left:424px;top:1113px;width:118px;height:8px;overflow:hidden"><span class="t" style="left:3.50px;top:7.36px;font-size:10.5px;letter-spacing:-0.290px;color:#000;">CSAN3008</span></div>
<div class="r" style="left:543px;top:1022px;width:21px;height:103px;background:#f0f0f0;"></div>
<svg class="r" style="left:548px;top:1030px" width="10" height="8" viewBox="0 0 10 8" fill="none" stroke="#555" stroke-width="1.5"><path d="M1 6.500 L5 2 L9 6.500"/></svg>
<div class="r" style="left:543px;top:1044px;width:21px;height:9px;background:#cdcdcd;"></div>
<svg class="r" style="left:548px;top:1111px" width="10" height="8" viewBox="0 0 10 8" fill="none" stroke="#555" stroke-width="1.5"><path d="M1 1.500 L5 6 L9 1.500"/></svg>
<div class="r" style="left:420px;top:992px;width:148px;height:133px;border:3px solid #f83e44;box-sizing:border-box;"></div>
<svg class="r" style="left:560px;top:1050px" width="404" height="126" viewBox="560 1050 404 126"><defs><filter id="gl" x="-10%" y="-10%" width="120%" height="120%"><feGaussianBlur stdDeviation="3"/></filter><clipPath id="cp"><path id="cshape" d="M641 1077 H949 Q957.500 1077 957.500 1085.500 V1162.500 Q957.500 1171 949 1171 H641 Q632.500 1171 632.500 1162.500 V1119.500 L567.500 1057 L632.500 1089.500 V1085.500 Q632.500 1077 641 1077Z"/></clipPath></defs><use href="#cshape" fill="#fff"/><g clip-path="url(#cp)"><use href="#cshape" fill="none" stroke="#f8474d" stroke-width="11" opacity=".68" filter="url(#gl)"/></g><use href="#cshape" fill="none" stroke="#f83c42" stroke-width="1.8"/></svg>
<span class="t" style="left:667.20px;top:1108.83px;font-size:23px;letter-spacing:0.566px;color:#0a0a0a;">Gợi ý mã thống kê theo</span>
<span class="t" style="left:655.00px;top:1136.03px;font-size:23px;letter-spacing:0.584px;color:#0a0a0a;">danh mục thiết bị tối thiểu</span>
<svg class="r" style="left:970px;top:410px" width="80" height="76" viewBox="970 410 80 76"><circle cx="978.4" cy="418.4" r="3.5" fill="#fb3e44"/><path d="M986.6 422.6 L990.6 426.6 L986.6 430.6 L982.6 426.6Z" fill="#fb3e44"/><path d="M995.1 430.8 L999.1 434.8 L995.1 438.8 L991.1 434.8Z" fill="#fb3e44"/><path d="M1003.6 439.3 L1007.6 443.3 L1003.6 447.3 L999.6 443.3Z" fill="#fb3e44"/><path d="M1012.2 447.8 L1016.2 451.8 L1012.2 455.8 L1008.2 451.8Z" fill="#fb3e44"/><path d="M1020.7 456 L1024.7 460 L1020.7 464 L1016.7 460Z" fill="#fb3e44"/><path d="M1034.1 461 L1022 473.500 L1040.700 479.700Z" fill="#fb3e44"/></svg>
</body></html>
